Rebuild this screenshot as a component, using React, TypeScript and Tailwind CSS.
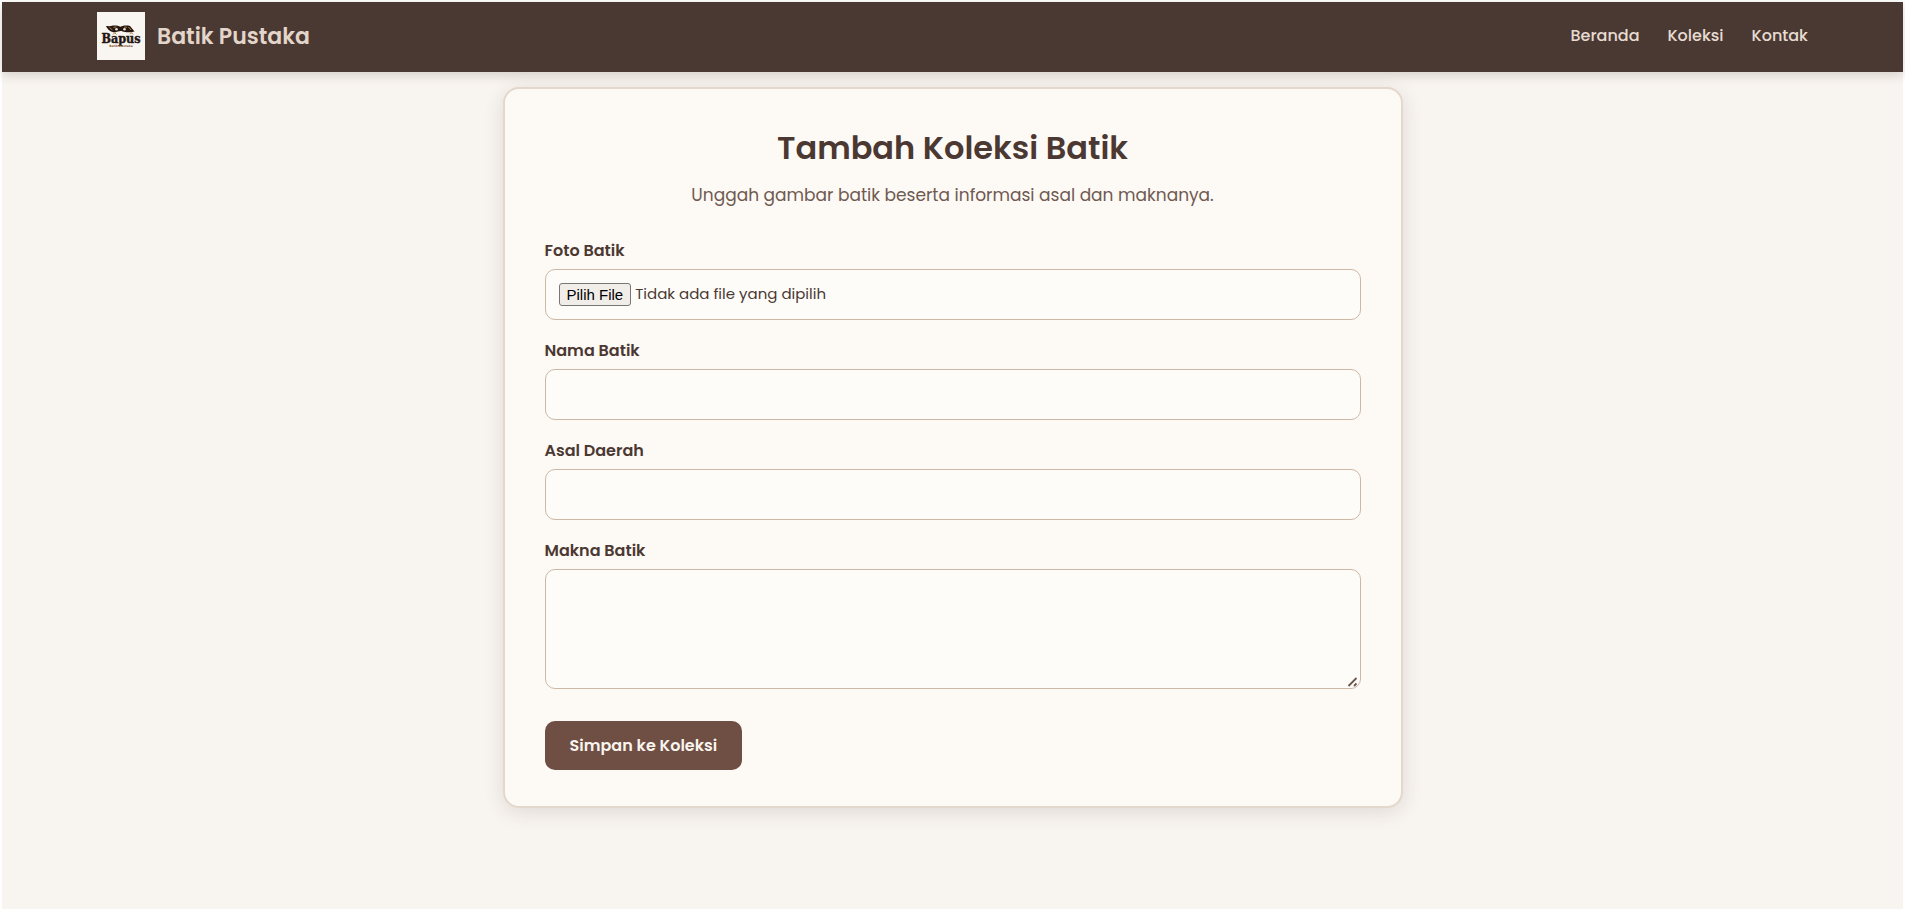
import { useRef, useState } from "react";

const navLinks = ["Beranda", "Koleksi", "Kontak"];

const fieldClass =
  "w-full rounded-[10px] border border-[#cdb8a5] bg-[#fdfcf8] px-[13px] text-[15px] text-[#4b3832] outline-none focus:border-[#6f4e43]";
const labelClass = "mb-1.5 block text-[16px] leading-6 font-semibold text-[#4b3832]";

function Logo() {
  return (
    <svg viewBox="0 0 48 48" className="size-12 shrink-0" role="img" aria-label="Bapus Batik Pustaka">
      <rect width="48" height="48" fill="#f9f6f1" />
      <path
        d="M9 14c3 .3 5 .2 7-.4 3-.3 5 .1 7.500 1.100 2.500-1 4.500-1.400 7.500-1.100l2 .3 4.500 5.600c-2.500.9-6.500 1-9.500.6-2-.3-3-1-4.500-1s-3 .9-5 1.100c-4.500.4-7.500-2-9.500-6.200z"
        fill="#241713"
      />
      <path
        d="M12.500 15.500l3 2.500M16.500 15.500c1-.6 2-.7 3-.4M27 15.500c1-.6 2-.6 3 0M31.500 15l2.500 3"
        stroke="#c98a3c"
        strokeWidth="0.900"
        fill="none"
      />
      <circle cx="19.500" cy="17.300" r="1.300" fill="#e9dcc8" />
      <circle cx="27.500" cy="17.300" r="1.300" fill="#e9dcc8" />
      <path d="M16 22.500l1.800-1.800 1.800 1.800M33 22.300l1.500-1.500 1.500 1.500" stroke="#b5722c" strokeWidth="1" fill="none" />
      <text
        x="24"
        y="30.500"
        textAnchor="middle"
        fontFamily="'DejaVu Serif Condensed', 'DejaVu Serif', serif"
        fontWeight="700"
        fontSize="12.500"
        fill="#241713"
        stroke="#241713"
        strokeWidth="0.400"
      >
        Bapus
      </text>
      <text x="24" y="34.500" textAnchor="middle" fontFamily="'DejaVu Sans', sans-serif" fontWeight="700" fontSize="3" fill="#8a5a38">
        Batik Pustaka
      </text>
    </svg>
  );
}

export default function App() {
  const fileRef = useRef<HTMLInputElement>(null);
  const [fileName, setFileName] = useState("Tidak ada file yang dipilih");

  return (
    <div className="min-h-screen border-2 border-white bg-[#f8f4ef] font-[Poppins,Inter,sans-serif] text-[#4b3832]">
      <header className="flex items-center justify-between bg-[#4a3933] px-[5%] pt-[10px] pb-3 shadow-[0_3px_10px_rgba(75,56,50,0.2)]">
        <a href="#" className="flex items-center gap-3 text-[22px] font-semibold text-[#e3d5ca]">
          <Logo />
          <span>Batik Pustaka</span>
        </a>
        <nav className="flex gap-7 text-[16px] font-medium text-[#e8dcd2]">
          {navLinks.map((name) => (
            <a key={name} href="#">
              {name}
            </a>
          ))}
        </nav>
      </header>

      <main className="mx-auto mt-[15px] max-w-[900px] rounded-2xl border-2 border-[#e3d8cc] bg-[#fdf9f4] px-10 py-9 shadow-[0_4px_20px_rgba(60,50,45,0.13)]">
        <h1 className="text-center text-[32px] leading-[46px] font-semibold">Tambah Koleksi Batik</h1>
        <p className="mt-3 mb-8 text-center text-[17px] leading-6 text-[#6f5a52]">
          Unggah gambar batik beserta informasi asal dan maknanya.
        </p>

        <form onSubmit={(e) => e.preventDefault()}>
          <div className="mb-[19px]">
            <label htmlFor="foto" className={labelClass}>
              Foto Batik
            </label>
            <div className={`${fieldClass} flex h-[51px] items-center gap-1`}>
              <input
                ref={fileRef}
                id="foto"
                type="file"
                className="sr-only"
                tabIndex={-1}
                onChange={(e) => setFileName(e.target.files?.[0]?.name ?? "Tidak ada file yang dipilih")}
              />
              <button
                type="button"
                onClick={() => fileRef.current?.click()}
                className="h-[23px] shrink-0 rounded-[3px] border border-[#767676] bg-[#f1eeea] px-[7px] font-['Liberation_Sans',Arial,sans-serif] text-[15px] leading-5 text-black"
              >
                Pilih File
              </button>
              <span>{fileName}</span>
            </div>
          </div>

          <div className="mb-[19px]">
            <label htmlFor="nama" className={labelClass}>
              Nama Batik
            </label>
            <input id="nama" type="text" className={`${fieldClass} block h-[51px]`} />
          </div>

          <div className="mb-[19px]">
            <label htmlFor="asal" className={labelClass}>
              Asal Daerah
            </label>
            <input id="asal" type="text" className={`${fieldClass} block h-[51px]`} />
          </div>

          <div className="mb-8">
            <label htmlFor="makna" className={labelClass}>
              Makna Batik
            </label>
            <div className="relative">
              <textarea
                id="makna"
                className={`${fieldClass} block h-[120px] resize-y py-3 [&::-webkit-resizer]:bg-transparent`}
              />
              <svg viewBox="0 0 12 12" className="pointer-events-none absolute right-0.5 bottom-0.5 size-3" aria-hidden="true">
                <path d="M1.500 11L9.500 3M7 11L9.500 8.500" stroke="#6b564c" strokeWidth="1.800" fill="none" />
              </svg>
            </div>
          </div>

          <button type="submit" className="h-[49px] rounded-[10px] bg-[#6f4e43] px-[25px] text-[16px] font-semibold text-[#f8f4ef]">
            Simpan ke Koleksi
          </button>
        </form>
      </main>
    </div>
  );
}
